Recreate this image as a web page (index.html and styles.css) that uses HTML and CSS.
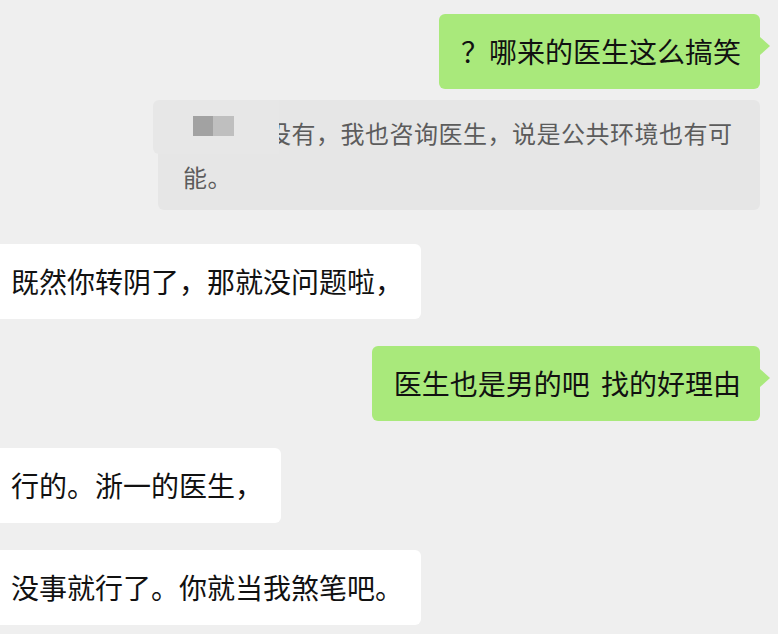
FILE: index.html
```html
<!DOCTYPE html>
<html lang="zh-CN">
<head>
  <meta charset="UTF-8" />
  <title>聊天记录</title>
  <meta name="viewport" content="width=device-width, initial-scale=1.0" />
  <link rel="stylesheet" href="styles.css">
</head>
<body>

  <!-- Chat -->
  <main class="chat">
    <div class="bubble mine first">？哪来的医生这么搞笑</div>

    <div class="quote">
      <div class="quote-patch">
        <span class="tile dark"></span><span class="tile light"></span>
      </div>
      <p class="quote-text">没有，我也咨询医生，说是公共环境也有可能。</p>
    </div>

    <div class="bubble theirs gap-big">既然你转阴了，那就没问题啦，</div>

    <div class="bubble mine spaced">医生也是男的吧 找的好理由</div>

    <div class="bubble theirs">行的。浙一的医生，</div>

    <div class="bubble theirs">没事就行了。你就当我煞笔吧。</div>
  </main>

</body>
</html>
```

FILE: styles.css
```css
body {
  margin: 0;
  background-color: #efefef;
  font-family: "Noto Sans CJK SC", "Noto Sans", sans-serif;
  color: #111;
  overflow: hidden;
}

.chat {
  display: flex;
  flex-direction: column;
  padding-top: 14px;
}

.bubble {
  position: relative;
  font-size: 28px;
  line-height: 35px;
  padding: 20px 19px 20px 22px;
  border-radius: 6px;
  margin-top: 27px;
  white-space: nowrap;
}

.bubble.first {
  margin-top: 0;
}

.mine {
  align-self: flex-end;
  margin-right: 18px;
  background-color: #a9e97b;
}

.mine::after {
  content: "";
  position: absolute;
  right: -10px;
  top: 23px;
  border-left: 10px solid #a9e97b;
  border-top: 9px solid transparent;
  border-bottom: 9px solid transparent;
}

.spaced {
  word-spacing: 5px;
}

.theirs {
  align-self: flex-start;
  margin-left: -10px;
  padding-left: 21px;
  padding-right: 18px;
  background-color: #ffffff;
}

.gap-big {
  margin-top: 34px;
}

.quote {
  position: relative;
  align-self: flex-end;
  margin-right: 18px;
  margin-top: 11px;
  width: 602px;
  box-sizing: border-box;
  padding: 11px 22px 11px 25px;
  background-color: #e6e6e6;
  border-radius: 6px;
}

.quote-text {
  margin: 0;
  font-size: 24px;
  line-height: 44px;
  letter-spacing: 0.5px;
  color: #5c5c5c;
  text-indent: 84px;
}

.quote-patch {
  position: absolute;
  left: -5px;
  top: 0;
  width: 126px;
  height: 54px;
  background-color: #e7e7e7;
  border-radius: 6px 0 0 6px;
  z-index: 1;
}

.tile {
  position: absolute;
  top: 16px;
  height: 20px;
}

.tile.dark {
  left: 40px;
  width: 20px;
  background-color: #a2a2a2;
}

.tile.light {
  left: 60px;
  width: 21px;
  background-color: #bfbfbf;
}
```
